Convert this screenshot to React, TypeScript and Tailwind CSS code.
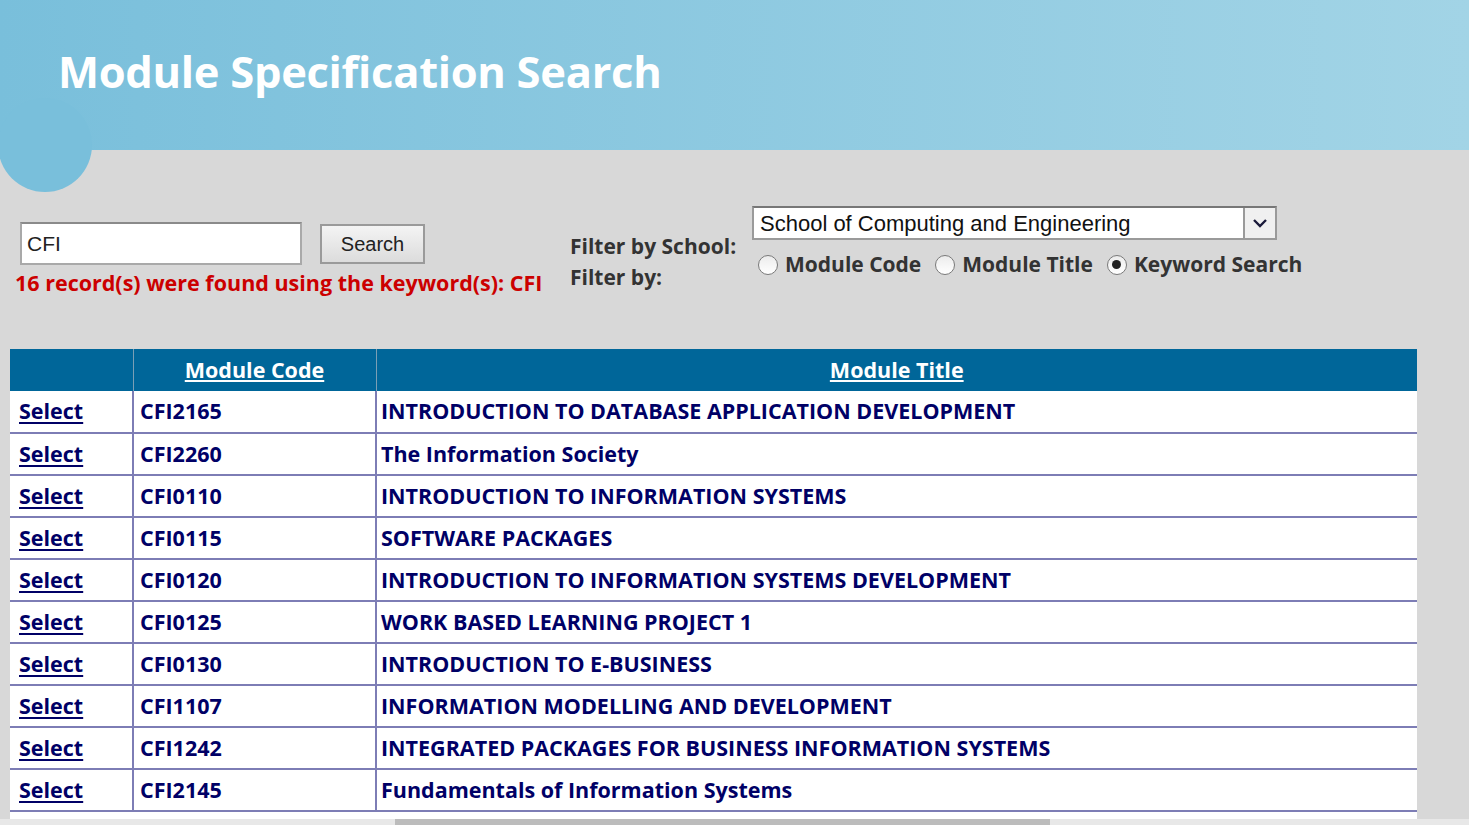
import React from 'react';

const rows: [string, string][] = [
  ['CFI2165', 'INTRODUCTION TO DATABASE APPLICATION DEVELOPMENT'],
  ['CFI2260', 'The Information Society'],
  ['CFI0110', 'INTRODUCTION TO INFORMATION SYSTEMS'],
  ['CFI0115', 'SOFTWARE PACKAGES'],
  ['CFI0120', 'INTRODUCTION TO INFORMATION SYSTEMS DEVELOPMENT'],
  ['CFI0125', 'WORK BASED LEARNING PROJECT 1'],
  ['CFI0130', 'INTRODUCTION TO E-BUSINESS'],
  ['CFI1107', 'INFORMATION MODELLING AND DEVELOPMENT'],
  ['CFI1242', 'INTEGRATED PACKAGES FOR BUSINESS INFORMATION SYSTEMS'],
  ['CFI2145', 'Fundamentals of Information Systems'],
];

const bold = "font-['Open_Sans',sans-serif] font-bold";

const Radio = ({ label, checked }: { label: string; checked?: boolean }) => (
  <label className="flex items-center gap-[7px]">
    <span className="w-[20px] h-[20px] rounded-full border border-[#7a7a7a] bg-gradient-to-b from-[#ececec] to-white flex items-center justify-center">
      {checked && <span className="w-[9px] h-[9px] rounded-full bg-[#222]" />}
    </span>
    <span className={`${bold} text-[21px] text-[#333]`}>{label}</span>
  </label>
);

export default function App() {
  return (
    <div className="w-[1469px] h-[825px] overflow-hidden bg-[#d8d8d8] flex flex-col">
      <header className="relative h-[150px] shrink-0 bg-gradient-to-r from-[#79bfdb] to-[#a2d4e6] flex items-center pl-[58px]">
        <h1 className={`${bold} text-white text-[43.5px] tracking-[-0.3px] pb-[7px]`}>Module Specification Search</h1>
        <div className="absolute left-[-2px] top-[98px] w-[94px] h-[94px] rounded-full bg-[#79bfdb]" />
      </header>

      <div className="flex h-[199px] shrink-0">
        <div className="pl-[15px] pt-[72px] w-[570px]">
          <div className="flex items-center pl-[5px] gap-[18px]">
            <div className="w-[282px] h-[43px] bg-white border-2 border-[#a9a9a9] border-t-[#8a8a8a] flex items-center pl-[5px] font-['Liberation_Sans',sans-serif] text-[21px] text-[#222]">
              CFI
            </div>
            <button className="w-[105px] h-[40px] border-2 border-[#9a9a9a] bg-gradient-to-b from-[#f4f4f4] to-[#dcdcdc] font-['Liberation_Sans',sans-serif] text-[20px] text-[#222]">
              Search
            </button>
          </div>
          <p className={`${bold} text-[21.5px] text-[#cc0000] mt-[4px] leading-[28px]`}>
            16 record(s) were found using the keyword(s): CFI
          </p>
        </div>

        <div className="flex pt-[56px]">
          <div className={`${bold} text-[21px] text-[#333] pt-[25px] leading-[31px] w-[182px]`}>
            <div>Filter by School:</div>
            <div>Filter by:</div>
          </div>
          <div className="flex flex-col gap-[9px]">
            <div className="w-[525px] h-[34px] bg-white border-2 border-[#9a9a9a] border-t-[#777] flex items-center justify-between pl-[6px]">
              <span className="font-['Liberation_Sans',sans-serif] text-[22px] text-[#111]">School of Computing and Engineering</span>
              <span className="w-[32px] h-full border-l-2 border-[#9a9a9a] bg-[#f0f0f0] flex items-center justify-center">
                <svg width="16" height="10" viewBox="0 0 16 10">
                  <path d="M2 2 L8 8 L14 2" fill="none" stroke="#1a1a3a" strokeWidth="2.4" />
                </svg>
              </span>
            </div>
            <div className="flex items-center gap-[14px] pl-[6px]">
              <Radio label="Module Code" />
              <Radio label="Module Title" />
              <Radio label="Keyword Search" checked />
            </div>
          </div>
        </div>
      </div>

      <div className="flex">
        <div className="ml-[10px] w-[1407px] bg-white">
          <table className={`w-full border-collapse ${bold} text-[21.5px] text-[#000066]`}>
            <thead>
              <tr className="bg-[#006699] h-[42px] text-white">
                <th className="w-[123px] border-r border-[#7a9fb5]" />
                <th className="w-[243px] border-r border-[#7a9fb5] underline font-bold">Module Code</th>
                <th className="underline font-bold">Module Title</th>
              </tr>
            </thead>
            <tbody>
              {rows.map(([code, title]) => (
                <tr key={code} className="h-[42px] border-b-2 border-[#7d7db5]">
                  <td className="pl-[9px] border-r-2 border-[#7d7db5]">
                    <a className="underline decoration-2 underline-offset-[3px] text-[#000066]">Select</a>
                  </td>
                  <td className="pl-[6px] border-r-2 border-[#7d7db5]">{code}</td>
                  <td className="pl-[4px]">{title}</td>
                </tr>
              ))}
            </tbody>
          </table>
          <div className="h-[7px]" />
        </div>
      </div>

      <div className="h-[6px] bg-[#e8e8e8] flex">
        <div className="ml-[395px] w-[655px] bg-[#bcbcbc]" />
      </div>
    </div>
  );
}
